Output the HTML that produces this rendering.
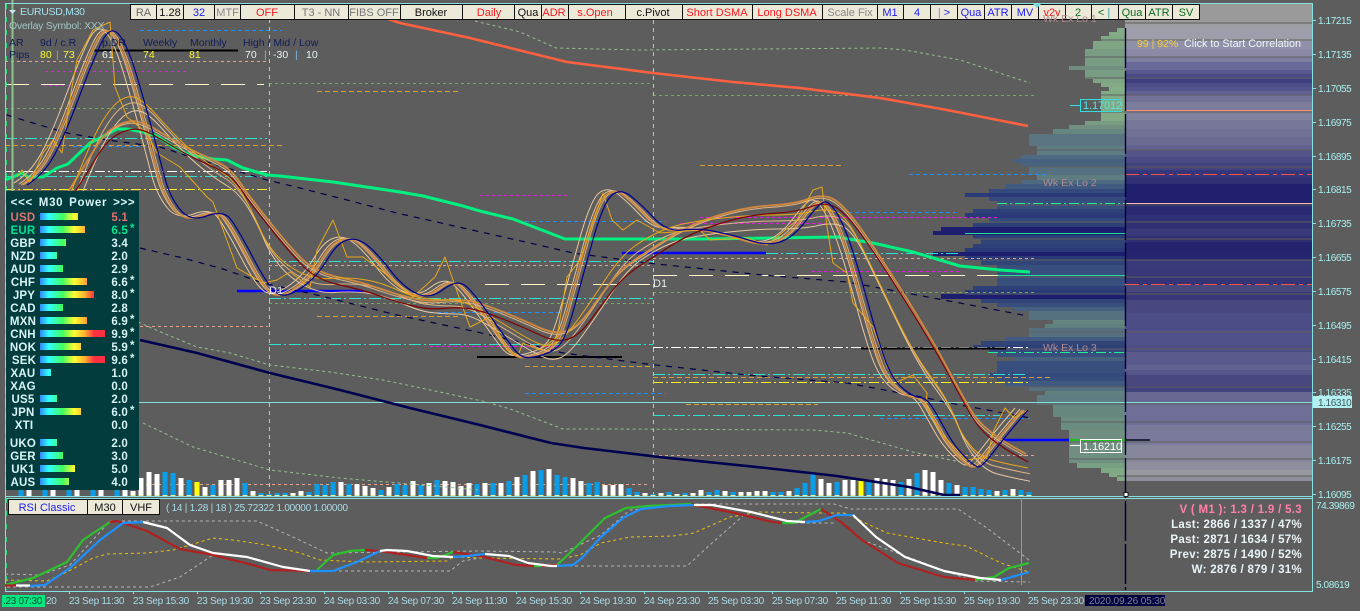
<!DOCTYPE html>
<html><head><meta charset="utf-8"><style>
html,body{margin:0;padding:0;width:1360px;height:611px;overflow:hidden;background:#5d5d5d}
svg{display:block;font-family:"Liberation Sans",sans-serif}
.bt rect{fill:#ece9d8;stroke:#111;stroke-width:1}
.bt text{font-size:11px;text-anchor:middle}
.ax text{font-size:10px;fill:#a8f0f0;letter-spacing:-.4px}
.tm text{font-size:10px;fill:#a8dce8;letter-spacing:-.3px}
.pn text{font-size:11.5px;font-weight:bold;fill:#d8f4f8;letter-spacing:.2px}
.rt text{font-size:11.5px;font-weight:bold;fill:#e8f4f8;text-anchor:end;letter-spacing:.3px}
.hd text{font-size:10.5px}
.t path,.t use{fill:none;stroke-linejoin:round}
</style></head><body>
<svg width="1360" height="611" viewBox="0 0 1360 611" xmlns="http://www.w3.org/2000/svg">
<defs><linearGradient id="g" gradientUnits="userSpaceOnUse" x1="40" y1="0" x2="106" y2="0">
<stop offset="0" stop-color="#3088ff"/><stop offset=".13" stop-color="#30ffff"/><stop offset=".34" stop-color="#40ff60"/><stop offset=".52" stop-color="#ffff30"/><stop offset=".68" stop-color="#ffb030"/><stop offset=".82" stop-color="#ff3040"/><stop offset="1" stop-color="#ff3040"/></linearGradient>
<clipPath id="c"><rect x="0" y="0" width="1030" height="496"/></clipPath>
<path id="nv" d="M27 185Q43 175 53 157.5Q63 140 78 100Q93 60 101.5 42.5Q110 25 118.5 34Q127 43 137 76.5Q147 110 153.5 135Q160 160 165 178.5Q170 197 180 209.5Q190 222 206.5 216Q223 210 230 218.5Q237 227 253.5 258.5Q270 290 278.5 294Q287 298 302 287.5Q317 277 327 260Q337 243 347 240Q357 237 367 245Q377 253 390 270Q403 287 416.5 293.5Q430 300 444 289Q458 278 467.5 287.5Q477 297 492 318.5Q507 340 513.5 348.5Q520 357 526.5 357.5Q533 358 545 354Q557 350 562 341.5Q567 333 573.5 310Q580 287 591.5 245Q603 203 611.5 195.5Q620 188 630 195.5Q640 203 653.5 217.5Q667 232 682 230Q697 228 715 231.5Q733 235 750 240.5Q767 246 780 242Q793 238 806.5 220Q820 202 825 202Q830 202 836.5 212.5Q843 223 850 243Q857 263 868.5 305Q880 347 886.5 363.5Q893 380 903 388.5Q913 397 920 397.5Q927 398 933.5 409Q940 420 947.5 433.5Q955 447 965 457Q975 467 978.5 467Q982 467 993.5 452Q1005 437 1016.5 423.5L1028 410"/>
<path id="rd" d="M70 200Q87 173 97 156.5Q107 140 118.5 134Q130 128 138.5 129.5Q147 131 157 137Q167 143 180 150.5Q193 158 210 165.5Q227 173 233.5 180Q240 187 244 193.5Q248 200 269 226.5Q290 253 303.5 266.5Q317 280 340 285Q363 290 380 296Q397 302 413.5 306Q430 310 443.5 308.5Q457 307 468.5 308.5Q480 310 501.5 318.5Q523 327 540 335Q557 343 568.5 339Q580 335 591.5 319Q603 303 613 290Q623 277 638 267Q653 257 673 244.5Q693 232 720 223.5Q747 215 772 213.5Q797 212 810 207Q823 202 833 206Q843 210 858 230Q873 250 901.5 295Q930 340 947.5 372.5Q965 405 972.5 417.5Q980 430 991.5 439Q1003 448 1015.5 455L1028 462"/>
<path id="s0" d="M68 200Q90 143 100 125.5Q110 108 118.5 101.5Q127 95 135 97.5Q143 100 155 113.5Q167 127 178.5 138.5Q190 150 201.5 158.5Q213 167 221.5 172Q230 177 238.5 188.5Q247 200 258.5 226.5Q270 253 290 266.5Q310 280 328.5 278.5Q347 277 363.5 279.5Q380 282 396.5 289.5Q413 297 425 298.5Q437 300 450 300Q463 300 480 310Q497 320 513.5 330Q530 340 538.5 343.5Q547 347 555 343.5Q563 340 576.5 321.5Q590 303 605 280Q620 257 633.5 247Q647 237 663.5 230Q680 223 713.5 219Q747 215 772 215Q797 215 812 211.5Q827 208 837 212.5Q847 217 860 243.5Q873 270 893 311.5Q913 353 930 375.5Q947 398 953.5 415.5Q960 433 970 445Q980 457 991.5 460Q1003 463 1015.5 465.5L1028 468"/>
</defs>
<rect width="1360" height="611" fill="#5d5d5d"/>

<!-- profile right -->
<g shape-rendering="crispEdges">
<rect x="1125" y="3" width="187" height="20" fill="#9a9a9a"/><rect x="1125" y="23" width="187" height="5" fill="#9e9ea2"/><rect x="1125" y="28" width="187" height="13" fill="#9d9dab"/><rect x="1125" y="41" width="187" height="8" fill="#9090a8"/><rect x="1125" y="49" width="187" height="8" fill="#8a8aa6"/><rect x="1125" y="57" width="187" height="5" fill="#7e7ea0"/><rect x="1125" y="62" width="187" height="8" fill="#6a6a9a"/><rect x="1125" y="70" width="187" height="4" fill="#58588e"/><rect x="1125" y="74" width="187" height="5" fill="#4a4a88"/><rect x="1125" y="79" width="187" height="4" fill="#3e3e80"/><rect x="1125" y="83" width="187" height="4" fill="#4e4e8a"/><rect x="1125" y="87" width="187" height="4" fill="#54548c"/><rect x="1125" y="91" width="187" height="4" fill="#626294"/><rect x="1125" y="95" width="187" height="7" fill="#737398"/><rect x="1125" y="102" width="187" height="10" fill="#7c7c9c"/><rect x="1125" y="112" width="187" height="8" fill="#80809f"/><rect x="1125" y="120" width="187" height="9" fill="#777799"/><rect x="1125" y="129" width="187" height="8" fill="#717195"/><rect x="1125" y="137" width="187" height="8" fill="#6c6c92"/><rect x="1125" y="145" width="187" height="5" fill="#626290"/><rect x="1125" y="150" width="187" height="7" fill="#54548a"/><rect x="1125" y="157" width="187" height="6" fill="#4a4a84"/><rect x="1125" y="163" width="187" height="7" fill="#42427e"/><rect x="1125" y="170" width="187" height="8" fill="#36367a"/><rect x="1125" y="178" width="187" height="6" fill="#303076"/><rect x="1125" y="184" width="187" height="22" fill="#20206e"/><rect x="1125" y="206" width="187" height="9" fill="#2a2a72"/><rect x="1125" y="215" width="187" height="7" fill="#303076"/><rect x="1125" y="222" width="187" height="7" fill="#2f2f74"/><rect x="1125" y="229" width="187" height="7" fill="#3a3a7a"/><rect x="1125" y="236" width="187" height="6" fill="#2e2e72"/><rect x="1125" y="242" width="187" height="11" fill="#24246e"/><rect x="1125" y="253" width="187" height="7" fill="#26266e"/><rect x="1125" y="260" width="187" height="8" fill="#3a3a7a"/><rect x="1125" y="268" width="187" height="7" fill="#38387a"/><rect x="1125" y="275" width="187" height="10" fill="#343476"/><rect x="1125" y="285" width="187" height="7" fill="#48487e"/><rect x="1125" y="292" width="187" height="8" fill="#383878"/><rect x="1125" y="300" width="187" height="13" fill="#48487f"/><rect x="1125" y="313" width="187" height="17" fill="#4c4c86"/><rect x="1125" y="330" width="187" height="15" fill="#50508a"/><rect x="1125" y="345" width="187" height="7" fill="#4e4e86"/><rect x="1125" y="352" width="187" height="13" fill="#5a5a8c"/><rect x="1125" y="365" width="187" height="5" fill="#626290"/><rect x="1125" y="370" width="187" height="5" fill="#56568a"/><rect x="1125" y="375" width="187" height="10" fill="#48487f"/><rect x="1125" y="385" width="187" height="7" fill="#42427c"/><rect x="1125" y="392" width="187" height="12" fill="#686892"/><rect x="1125" y="404" width="187" height="21" fill="#6e6e96"/><rect x="1125" y="425" width="187" height="20" fill="#7a7a9a"/><rect x="1125" y="445" width="187" height="17" fill="#86869d"/><rect x="1125" y="462" width="187" height="8" fill="#8e8e9f"/><rect x="1125" y="470" width="187" height="6" fill="#98989e"/><rect x="1125" y="476" width="187" height="5" fill="#8f8f9c"/>

<!-- profile histogram -->
<rect x="1117" y="28" width="8" height="4" fill="#82ab85"/><rect x="1109" y="32" width="16" height="4" fill="#82ab85"/><rect x="1101" y="36" width="24" height="5" fill="#7fa885"/><rect x="1093" y="41" width="32" height="8" fill="#7fa585"/><rect x="1085" y="49" width="40" height="17" fill="#789d83"/><rect x="1069" y="66" width="56" height="4" fill="#708f80"/><rect x="1085" y="70" width="40" height="9" fill="#789d83"/><rect x="1093" y="79" width="32" height="4" fill="#7fa585"/><rect x="1101" y="83" width="24" height="4" fill="#82ab85"/><rect x="1109" y="87" width="16" height="4" fill="#84ae87"/><rect x="1101" y="91" width="24" height="30" fill="#82ab85"/><rect x="1085" y="121" width="40" height="4" fill="#789d83"/><rect x="1069" y="125" width="56" height="4" fill="#708f80"/><rect x="1053" y="129" width="72" height="5" fill="#668780"/><rect x="1029" y="134" width="96" height="12" fill="#5a7482"/><rect x="1037" y="146" width="88" height="9" fill="#5f7c82"/><rect x="1021" y="155" width="104" height="4" fill="#4e6a82"/><rect x="1013" y="159" width="112" height="4" fill="#466080"/><rect x="1021" y="163" width="104" height="4" fill="#4a6480"/><rect x="1029" y="167" width="96" height="8" fill="#557080"/><rect x="1037" y="175" width="88" height="5" fill="#5f7c82"/><rect x="1021" y="180" width="104" height="4" fill="#4e6a82"/><rect x="1005" y="184" width="120" height="5" fill="#405a80"/><rect x="989" y="189" width="136" height="4" fill="#344a7c"/><rect x="965" y="193" width="160" height="4" fill="#2a3a78"/><rect x="989" y="197" width="136" height="4" fill="#344a7c"/><rect x="997" y="201" width="128" height="8" fill="#384f7e"/><rect x="973" y="209" width="152" height="4" fill="#2e4078"/><rect x="965" y="213" width="160" height="5" fill="#2a3a78"/><rect x="989" y="218" width="136" height="5" fill="#344a7c"/><rect x="973" y="223" width="152" height="4" fill="#2e4078"/><rect x="941" y="227" width="184" height="4" fill="#1e1e70"/><rect x="933" y="231" width="192" height="4" fill="#1e1e70"/><rect x="973" y="235" width="152" height="4" fill="#2e4078"/><rect x="981" y="239" width="144" height="5" fill="#304478"/><rect x="973" y="244" width="152" height="4" fill="#2e4078"/><rect x="965" y="248" width="160" height="4" fill="#2a3a78"/><rect x="933" y="252" width="192" height="4" fill="#1e1e70"/><rect x="965" y="256" width="160" height="4" fill="#2a3a78"/><rect x="981" y="260" width="144" height="5" fill="#304478"/><rect x="997" y="265" width="128" height="21" fill="#384f7e"/><rect x="973" y="286" width="152" height="4" fill="#2e4078"/><rect x="965" y="290" width="160" height="4" fill="#2a3a78"/><rect x="941" y="294" width="184" height="5" fill="#1e1e70"/><rect x="981" y="299" width="144" height="4" fill="#304478"/><rect x="997" y="303" width="128" height="4" fill="#384f7e"/><rect x="1013" y="307" width="112" height="4" fill="#466080"/><rect x="1029" y="311" width="96" height="9" fill="#557080"/><rect x="1053" y="320" width="72" height="4" fill="#668780"/><rect x="1045" y="324" width="80" height="4" fill="#60807f"/><rect x="1029" y="328" width="96" height="9" fill="#557080"/><rect x="1005" y="337" width="120" height="4" fill="#405a80"/><rect x="981" y="341" width="144" height="4" fill="#304478"/><rect x="973" y="345" width="152" height="4" fill="#2e4078"/><rect x="989" y="349" width="136" height="4" fill="#344a7c"/><rect x="997" y="353" width="128" height="4" fill="#384f7e"/><rect x="1013" y="357" width="112" height="4" fill="#466080"/><rect x="997" y="361" width="128" height="12" fill="#384f7e"/><rect x="989" y="373" width="136" height="4" fill="#344a7c"/><rect x="997" y="377" width="128" height="4" fill="#384f7e"/><rect x="1005" y="381" width="120" height="6" fill="#405a80"/><rect x="1029" y="387" width="96" height="4" fill="#557080"/><rect x="1045" y="391" width="80" height="4" fill="#60807f"/><rect x="1037" y="395" width="88" height="10" fill="#5f7c82"/><rect x="1053" y="405" width="72" height="12" fill="#668780"/><rect x="1061" y="417" width="64" height="13" fill="#6b8c80"/><rect x="1069" y="430" width="56" height="33" fill="#708f80"/><rect x="1077" y="463" width="48" height="5" fill="#78a083"/><rect x="1101" y="468" width="24" height="5" fill="#7fa885"/><rect x="1109" y="473" width="16" height="4" fill="#82ab85"/><rect x="1117" y="477" width="8" height="4" fill="#82ab85"/>
</g>
<!-- profile grid -->
<path d="M1085 23H1312M1093 40H1312M1085 57H1312M1085 78H1312M1101 95H1312M1101 112H1312M1037 150H1312M1021 167H1312M997 205H1312M989 222H1312M973 239H1312M981 260H1312M997 277H1312M965 294H1312M1029 332H1312M973 349H1312M1005 387H1312M1037 404H1312M1061 422H1312M1069 442H1312M1069 459H1312M1117 476H1312" stroke="#5f5f5f" stroke-width="1" shape-rendering="crispEdges"/>

<!-- horizontal level lines -->
<g fill="none" stroke-width="1" shape-rendering="crispEdges">
<path d="M140 30.5H282M73 146.5H145M525 221.5H666M430 312.5H560M525 393.5H666M848 212.5H955M909 174.5H1050M880 418.5H1030" stroke="#2090ff" stroke-dasharray="4 3"/>
<path d="M5 61.5H268M140 326.5H268M653 258.5H1034M269 265.5H653M140 484.5H650M653 455.5H1034" stroke="#e8a48a" stroke-dasharray="3 3"/>
<path d="M45 71.5H187M43 85.5H70M480 195.5H570M700 217.5H1000M680 223.5H830M812 271.5H960M430 346.5H560" stroke="#e020e0" stroke-dasharray="3 3"/>
<path d="M5 84.5H264M485 284.5H650M653 275.5H1126" stroke="#fff8c8" stroke-dasharray="24 12" stroke-width="1"/>
<path d="M5 108.5H267M269 83.5H650M269 303.5H653M653 95.5H1034M653 292.5H1034" stroke="#74ad58" stroke-dasharray="3 3"/>
<path d="M5 138.5H267M5 176.5H267M269 261.5H653M269 298.5H653M269 344.5H653M653 374.5H1028M653 415.5H1000M766 253.5H960" stroke="#30e0d0" stroke-dasharray="12 3 2 3"/>
<path d="M5 145.5H282M317 91.5H458M317 316.5H458M653 377.5H1050M700 165.5H842M686 404.5H818M525 366.5H653" stroke="#d8a030" stroke-dasharray="5 3"/>
<path d="M5 171.5H267M653 347.5H1028" stroke="#fff" stroke-dasharray="10 3 2 3"/>
<path d="M5 189.5H267M653 382.5H1028" stroke="#f8f020" stroke-dasharray="10 3 2 3"/>
<path d="M988 352.5H1126M997 203.5H1126" stroke="#20f090" stroke-dasharray="10 3 2 3"/>
<path d="M965 233.5H1126M998 275.5H1126" stroke="#20e0a0"/>
<path d="M1125 203.5H1312" stroke="#ffb8b8"/>
<path d="M1125 110.5H1312" stroke="#ff9070" stroke-width="1"/>
<path d="M1125 174.5H1312M1125 284.5H1312" stroke="#ff5040" stroke-dasharray="14 4 4 4"/>
<path d="M269.5 3V496M653.5 20V496" stroke="#c4c4c4" stroke-dasharray="4 4"/>
<path d="M5 402.5H1312" stroke="#80e0d8"/>
</g>
<path d="M94 50.5H238M477 357H622M861 348.5H1006" stroke="#000" stroke-width="2" fill="none"/>
<path d="M237 291H363M622 253H766M1003 440H1069" stroke="#0000ff" stroke-width="2.4" fill="none"/>
<path d="M1069 440H1125" stroke="#20c020" stroke-width="2" fill="none"/>
<path d="M1125 440H1150" stroke="#20243c" stroke-width="2" fill="none"/>

<!-- volume bars -->
<g fill="none" stroke-width="5" shape-rendering="crispEdges">
<path stroke="#fff" d="M133 496V491M141 496V478M149 496V472M157 496V474M181 496V478M205 496V487M221 496V480M229 496V480M237 496V478M253 496V491M293 496V493M301 496V491M341 496V482M357 496V484M365 496V486M373 496V488M389 496V487M413 496V481M429 496V483M445 496V481M453 496V482M461 496V486M469 496V483M485 496V483M501 496V483M517 496V477M533 496V471M549 496V469M573 496V478M581 496V481M605 496V485M613 496V485M621 496V484M645 496V493M661 496V493M677 496V494M693 496V493M701 496V490M725 496V491M741 496V492M749 496V492M757 496V491M765 496V491M789 496V491M821 496V479M829 496V483M845 496V480M853 496V480M877 496V478M885 496V479M893 496V480M909 496V479M925 496V470M933 496V472M941 496V480M957 496V485M997 496V491M1013 496V489M29 496V490M53 496V490M77 496V490M101 496V490M125 496V490"/>
<path stroke="#0a9ee8" d="M165 496V472M173 496V473M189 496V480M213 496V485M245 496V483M261 496V493M269 496V494M277 496V493M285 496V493M309 496V492M317 496V484M325 496V485M333 496V482M349 496V484M381 496V490M397 496V484M405 496V485M421 496V485M437 496V480M477 496V484M493 496V483M509 496V481M525 496V475M541 496V470M557 496V475M565 496V477M589 496V483M597 496V482M629 496V488M637 496V492M653 496V494M669 496V492M685 496V493M709 496V492M717 496V490M733 496V492M773 496V492M781 496V492M797 496V488M805 496V483M813 496V474M837 496V482M869 496V481M901 496V482M917 496V473M949 496V483M965 496V487M973 496V487M981 496V489M989 496V490M1005 496V490M1021 496V490M1029 496V492M21 496V490M45 496V490M69 496V490M93 496V490M117 496V490"/>
<path stroke="#ffff00" d="M197 496V482M861 496V481"/>
</g>
<path d="M130.5 495.5H1032" stroke="#e8f0a0" stroke-width="1" stroke-dasharray="5 3" fill="none"/>

<!-- thin dashed envelopes -->
<g fill="none" stroke="#93c08e" stroke-width="1" stroke-dasharray="3 3">
<path d="M475 21L520 32L556 48L640 50L880 48L905 50L960 60L1030 83"/>
<path d="M138 322L163 333L197 347L230 353L270 365L330 372L383 380L487 402L513 410L563 429L613 429L813 430L847 433L913 452L960 462"/>
<path d="M143 423L193 447L270 470L340 478L480 490"/>
</g>
<!-- dotted curves -->
<g fill="none" stroke="#000048" stroke-width="1.2" stroke-dasharray="6 6">
<path d="M7 115L33 123L67 133L107 140L160 147L200 160L267 180L300 188L347 200L397 213L463 228L530 243L573 253L647 263L763 275L847 282L960 303L1028 316"/>
<path d="M140 248L183 258L223 269L263 283L317 295L397 315L477 332L520 342L563 353L647 364L747 375L847 383L927 398L944 402L998 412L1030 418"/>
</g>
<!-- moving averages -->
<g fill="none" stroke-linejoin="round">
<path d="M385 18L400 23L470 38L567 62L653 73L733 82L800 88L880 98L947 110L1028 126" stroke="#ff6040" stroke-width="2.6"/>
<path d="M140 340L197 353L270 373L340 390L410 408L480 425L551 443L584 448L659 457L766 468L837 476L909 487L944 495L960 495" stroke="#000050" stroke-width="2.6"/>
<path d="M5 180L13 177L22 173L28 177L43 177L57 168L68 164L90 143L100 138L117 129L127 129L143 132L157 136L173 147L190 155L213 159L227 160L243 168L267 175L280 176L333 182L400 192L423 196L463 206L480 211L513 219L547 232L565 239L700 239L837 237L873 243L913 252L960 266L1000 270L1030 272" stroke="#00f080" stroke-width="3"/>
</g>

<!-- wiggles -->
<g class="t" clip-path="url(#c)">
<use href="#nv" stroke="#dcae7c" stroke-width="1" transform="translate(-4 0)"/>
<use href="#nv" stroke="#e6bf90" stroke-width="1" transform="translate(-8 -1)"/>
<use href="#nv" stroke="#e8c8a0" stroke-width="1" transform="translate(-13 -2)"/>
<use href="#nv" stroke="#d08a40" stroke-width="1.6" transform="translate(-6 0)"/>
<use href="#s0" stroke="#e0b484" stroke-width="1" transform="translate(3 6)"/>
<use href="#s0" stroke="#e8c8a0" stroke-width="1" transform="translate(6 14)"/>
<use href="#rd" stroke="#e0b484" stroke-width="1" transform="translate(-3 -6)"/>
<use href="#rd" stroke="#d08a40" stroke-width="1.8" transform="translate(-2 -8)"/>
<path stroke="#e8a818" stroke-width="1" d="M17 177L22 170L30 183L43 153L53 140L62 153L72 87L77 60L93 30L110 22L115 87L127 117L147 133L157 153L180 167L207 197L213 202L237 268L263 283L277 280L290 272L310 287L317 250L333 220L347 257L363 257L383 272L413 297L435 277L445 257L460 300L470 327L490 317L507 350L518 355L523 343L540 350L557 337L567 277L580 260L603 193L612 220L623 230L637 220L660 233L700 230L710 240L747 238L767 245L783 232L797 220L813 190L822 187L827 227L833 263L847 273L853 303L873 327L887 367L897 382L913 375L927 393L926 405L941 433L966 460L987 457L994 430L1005 408L1014 418L1028 410"/>
<use href="#s0" stroke="#e8a818" stroke-width="1"/>
<use href="#rd" stroke="#800000" stroke-width="1.2"/>
<use href="#nv" stroke="#000090" stroke-width="1.2"/>
</g>

<!-- frame -->
<path d="M12.5 0V191" stroke="#8fc48f" stroke-width="2" fill="none"/>
<g fill="none" stroke="#88e0e0" stroke-width="1" shape-rendering="crispEdges">
<path d="M5.5 3.5H1312.5V591.5H5.5Z"/>
<path d="M5 496.5H1312M5 498.5H1312"/>
<path d="M1312 20.5h4M1312 54.5h4M1312 88.5h4M1312 122.5h4M1312 156.5h4M1312 189.5h4M1312 223.5h4M1312 257.5h4M1312 291.5h4M1312 325.5h4M1312 359.5h4M1312 392.5h4M1312 426.5h4M1312 460.5h4M1312 494.5h4"/>
<path d="M69.5 591v3M133.5 591v3M197.5 591v3M260.5 591v3M324.5 591v3M388.5 591v3M452.5 591v3M516.5 591v3M580.5 591v3M644.5 591v3M708.5 591v3M772.5 591v3M836.5 591v3M900.5 591v3M964.5 591v3M1028.5 591v3"/>
</g>
<path d="M6 4V590" stroke="#20ff90" stroke-width="1.5" stroke-dasharray="5 8" fill="none"/>
<path d="M1125.5 28V590" stroke="#000038" stroke-width="1.4" stroke-dasharray="40 3" fill="none"/>
<rect x="1124" y="492.5" width="4" height="4" fill="#fff" stroke="#000" stroke-width=".8"/>

<!-- axis -->
<g class="ax">
<text x="1318" y="24">1.17215</text><text x="1318" y="58">1.17135</text><text x="1318" y="92">1.17055</text><text x="1318" y="126">1.16975</text><text x="1318" y="160">1.16895</text><text x="1318" y="193">1.16815</text><text x="1318" y="227">1.16735</text><text x="1318" y="261">1.16655</text><text x="1318" y="295">1.16575</text><text x="1318" y="329">1.16495</text><text x="1318" y="363">1.16415</text><text x="1318" y="396">1.16335</text><text x="1318" y="430">1.16255</text><text x="1318" y="464">1.16175</text><text x="1318" y="498">1.16095</text>
<text x="1316" y="509">74.39869</text><text x="1316" y="588">5.08619</text>
</g>
<rect x="1313" y="396" width="39" height="12" fill="#b4f0f0"/>
<text x="1318" y="406" font-size="10" letter-spacing="-.4" fill="#3a5a5a">1.16310</text>

<!-- price tags -->
<path d="M1070 105.5H1080" stroke="#30e0e0"/>
<rect x="1080.5" y="99.5" width="41" height="12" fill="none" stroke="#30e0e0"/>
<text x="1083" y="109" font-size="11" fill="#50e8e8" letter-spacing="-.1">1.17012</text>
<path d="M1070 445.5H1080" stroke="#fff"/>
<rect x="1080.5" y="439.5" width="41" height="13" fill="none" stroke="#fff"/>
<text x="1083" y="450" font-size="11" fill="#fff" letter-spacing="-.1">1.16210</text>
<text x="653" y="287" font-size="11" fill="#e8f0f0">D1</text>
<text x="269" y="294" font-size="11" fill="#e8f0f0">D1</text>

<!-- toolbar -->
<g class="bt">
<rect x="130.5" y="4.5" width="26" height="15"/><text x="143.5" y="16" fill="#666">RA</text>
<rect x="156.5" y="4.5" width="27" height="15"/><text x="170" y="16" fill="#111">1.28</text>
<rect x="183.5" y="4.5" width="31" height="15"/><text x="199" y="16" fill="#2020f0">32</text>
<rect x="214.5" y="4.5" width="26" height="15"/><text x="227.5" y="16" fill="#888">MTF</text>
<rect x="240.5" y="4.5" width="54" height="15"/><text x="267" y="16" fill="#f81820">OFF</text>
<rect x="294.5" y="4.5" width="54" height="15"/><text x="321" y="16" fill="#777">T3 - NN</text>
<rect x="348.5" y="4.5" width="52" height="15"/><text x="374" y="16" fill="#777">FIBS OFF</text>
<rect x="400.5" y="4.5" width="62" height="15"/><text x="431" y="16" fill="#111">Broker</text>
<rect x="462.5" y="4.5" width="52" height="15"/><text x="489" y="16" fill="#f81820">Daily</text>
<rect x="514.5" y="4.5" width="27" height="15"/><text x="528" y="16" fill="#111">Qua</text>
<rect x="541.5" y="4.5" width="27" height="15"/><text x="554" y="16" fill="#f81820">ADR</text>
<rect x="568.5" y="4.5" width="57" height="15"/><text x="595" y="16" fill="#f81820">s.Open</text>
<rect x="625.5" y="4.5" width="57" height="15"/><text x="653" y="16" fill="#111">c.Pivot</text>
<rect x="682.5" y="4.5" width="70" height="15"/><text x="717" y="16" fill="#f81820">Short DSMA</text>
<rect x="752.5" y="4.5" width="70" height="15"/><text x="787" y="16" fill="#f81820">Long DSMA</text>
<rect x="822.5" y="4.5" width="55" height="15"/><text x="850" y="16" fill="#888">Scale Fix</text>
<rect x="877.5" y="4.5" width="26" height="15"/><text x="890" y="16" fill="#2020f0">M1</text>
<rect x="903.5" y="4.5" width="27" height="15"/><text x="917" y="16" fill="#2020f0">4</text>
<rect x="930.5" y="4.5" width="27" height="15"/><text x="944" y="16" fill="#2020f0"><tspan fill="#a070f0">|</tspan> &gt;</text>
<rect x="957.5" y="4.5" width="27" height="15"/><text x="971" y="16" fill="#2020f0">Qua</text>
<rect x="984.5" y="4.5" width="27" height="15"/><text x="998" y="16" fill="#2020f0">ATR</text>
<rect x="1011.5" y="4.5" width="27" height="15"/><text x="1025" y="16" fill="#2020f0">MV</text>
<rect x="1038.5" y="4.5" width="27" height="15"/><text x="1052" y="16" fill="#f81820">v2v</text>
<rect x="1065.5" y="4.5" width="26" height="15"/><text x="1078" y="16" fill="#0a6a20">2</text>
<rect x="1091.5" y="4.5" width="27" height="15"/><text x="1104" y="16" fill="#0a6a20">&lt; <tspan fill="#30a0a0">|</tspan></text>
<rect x="1118.5" y="4.5" width="27" height="15"/><text x="1132" y="16" fill="#0a6a20">Qua</text>
<rect x="1145.5" y="4.5" width="27" height="15"/><text x="1159" y="16" fill="#0a6a20">ATR</text>
<rect x="1172.5" y="4.5" width="27" height="15"/><text x="1186" y="16" fill="#0a6a20">SV</text>
<rect x="8.5" y="499.5" width="79" height="15"/><text x="47" y="511" fill="#2020f0">RSI Classic</text>
<rect x="87.5" y="499.5" width="35" height="15"/><text x="105" y="511" fill="#111">M30</text>
<rect x="122.5" y="499.5" width="37" height="15"/><text x="141" y="511" fill="#111">VHF</text>
</g>
<path d="M1033 4h8l-4 4z" fill="#70d8e0"/>

<!-- header text -->
<g class="hd">
<path d="M9 10h7l-3.5 4z" fill="#c8e8f0"/>
<text x="20" y="15" fill="#a0e0ec" letter-spacing="-.3">EURUSD,M30</text>
<text x="9" y="29" fill="#a0c4c4" letter-spacing="-.3">Overlay Symbol: XXX</text>
<g fill="#101c58">
<text x="9" y="46">AR</text><text x="40" y="46">9d / c.R</text><text x="102" y="46">p.DR</text><text x="143" y="46">Weekly</text><text x="190" y="46">Monthly</text><text x="243" y="46">High / Mid / Low</text><text x="9" y="58">Pips</text>
</g>
<g fill="#f8f830">
<text x="40" y="58">80</text><text x="63" y="58">73</text><text x="143" y="58">74</text><text x="189" y="58">81</text>
</g>
<text x="56" y="58" fill="#c8a030">|</text>
<g fill="#e8f4f8">
<text x="102" y="58">61</text><text x="245" y="58">70</text><text x="273" y="58">-30</text><text x="306" y="58">10</text>
</g>
<text x="264" y="58" fill="#80b8e8">|</text><text x="295" y="58" fill="#80b8e8">|</text>
<text x="1137" y="47" fill="#f8d030">99 | 92%</text>
<text x="1184" y="47" fill="#f0f8fc" style="font-size:10.8px">Click to Start Correlation</text>
<text x="1043" y="22" fill="#b08a90">Wk Ex Lo 1</text>
<text x="1043" y="186" fill="#b08a90">Wk Ex Lo 2</text>
<text x="1043" y="351" fill="#b08a90">Wk Ex Lo 3</text>
<text x="166" y="511" fill="#a8dce8" style="font-size:10px" letter-spacing="-.25">( 14 | 1.28 | 18 ) 25.72322 1.00000 1.00000</text>
</g>

<!-- power panel -->
<rect x="6" y="191" width="133" height="299" fill="#023c3c"/>
<g class="pn">
<text x="73" y="206" text-anchor="middle" style="letter-spacing:.7px;word-spacing:2px">&lt;&lt;&lt; M30 Power &gt;&gt;&gt;</text>
<g text-anchor="middle">
<text x="23" y="221" style="fill:#e87070">USD</text><text x="23" y="234" style="fill:#00e090">EUR</text><text x="23" y="247">GBP</text><text x="23" y="260">NZD</text><text x="23" y="273">AUD</text><text x="23" y="286">CHF</text><text x="24" y="299">JPY</text><text x="23" y="312">CAD</text><text x="23" y="325">MXN</text><text x="23" y="338">CNH</text><text x="23" y="351">NOK</text><text x="24" y="364">SEK</text><text x="23" y="377">XAU</text><text x="23" y="390">XAG</text><text x="23" y="403">US5</text><text x="23" y="416">JPN</text><text x="24" y="429">XTI</text><text x="23" y="447">UKO</text><text x="23" y="460">GER</text><text x="23" y="473">UK1</text><text x="23" y="486">AUS</text>
</g>
<g text-anchor="end">
<text x="128" y="221" style="fill:#e87070">5.1</text><text x="128" y="234" style="fill:#00e890">6.5</text><text x="128" y="247">3.4</text><text x="128" y="260">2.0</text><text x="128" y="273">2.9</text><text x="128" y="286">6.6</text><text x="128" y="299">8.0</text><text x="128" y="312">2.8</text><text x="128" y="325">6.9</text><text x="128" y="338">9.9</text><text x="128" y="351">5.9</text><text x="128" y="364">9.6</text><text x="128" y="377">1.0</text><text x="128" y="390">0.0</text><text x="128" y="403">2.0</text><text x="128" y="416">6.0</text><text x="128" y="429">0.0</text><text x="128" y="447">2.0</text><text x="128" y="460">3.0</text><text x="128" y="473">5.0</text><text x="128" y="486">4.0</text>
</g>
<text x="130" y="232" style="fill:#00e890">*</text><text x="130" y="284">*</text><text x="130" y="297">*</text><text x="130" y="323">*</text><text x="130" y="336">*</text><text x="130" y="349">*</text><text x="130" y="362">*</text><text x="130" y="414">*</text>
</g>
<g fill="url(#g)" shape-rendering="crispEdges">
<rect x="40" y="213" width="38" height="7"/><rect x="40" y="226" width="45" height="7"/><rect x="40" y="239" width="26" height="7"/><rect x="40" y="252" width="17" height="7"/><rect x="40" y="265" width="23" height="7"/><rect x="40" y="278" width="47" height="7"/><rect x="40" y="291" width="54" height="7"/><rect x="40" y="304" width="23" height="7"/><rect x="40" y="317" width="47" height="7"/><rect x="40" y="330" width="65" height="7"/><rect x="40" y="343" width="41" height="7"/><rect x="40" y="356" width="65" height="7"/><rect x="40" y="369" width="11" height="7"/><rect x="40" y="395" width="17" height="7"/><rect x="40" y="408" width="41" height="7"/><rect x="40" y="439" width="17" height="7"/><rect x="40" y="452" width="23" height="7"/><rect x="40" y="465" width="35" height="7"/><rect x="40" y="478" width="29" height="7"/>
</g>

<!-- RSI pane -->
<g fill="none" stroke-linejoin="round">
<path d="M5 574L40 575L70 565L110 521L257 521L293 537L327 553L477 551L555 552L562 553L601 535L630 510L694 504L834 504L851 509L958 509L987 528L1029 560" stroke="#b4b4b4" stroke-dasharray="3 3"/>
<path d="M7 587L150 587L180 577L213 555M333 571L450 571L463 561L480 558M569 566L687 566L712 543L744 515L780 523L834 523M862 540L973 581L1030 582" stroke="#b4b4b4" stroke-dasharray="3 3"/>
<path d="M5 580L47 581L67 572L93 558L107 554L147 553L173 550L200 542L213 538L233 540L267 545L300 553L320 560L367 562L447 561L453 557L480 558L559 559L580 555L601 543L630 537L673 536L694 533L730 517L759 512L823 513L844 513L887 533L944 543L966 546L1001 563L1029 572" stroke="#f0c000" stroke-dasharray="3 3"/>
<path d="M1021.5 498V585" stroke="#9a9a9a"/>
<g stroke-width="2.2">
<path stroke="#2ec02e" d="M5 585L33 578L67 562L83 540L110 522M317 570L333 555L350 551L365 550M427 558L437 558L453 552M534 566L542 566M557 565L576 547L605 518L626 508L648 506L691 504M782 523L794 523L821 509M975 580L994 577L1009 568L1029 563"/>
<path stroke="#b02020" d="M5 585.5H16M110 522L117 521L147 531L180 549L213 555L253 565L270 570L310 571M365 550L380 551L427 558M453 552L480 556L516 565L534 566M542 566L557 565M691 504L694 505L730 512L773 522L782 523M821 509L841 522L862 540L898 563L944 577L975 580"/>
<path stroke="#1e90ff" d="M30 586L45 585L70 568L100 540L123 523L143 522M310 571L333 571L357 562L380 551M453 557L467 556L485 554M557 566L573 565L582 558L601 537L623 518L641 509L669 506L694 505M805 522L819 521L837 515L853 515M1001 580L1029 572"/>
<path stroke="#fff" d="M16 585.5H30M143 522L167 528L190 545L213 553L247 557L283 567L310 571M380 551L387 550L407 551L433 556L453 557M485 554L509 556L528 563L551 566L557 566M694 505L712 505L751 512L787 521L805 522M853 515L876 537L905 557L944 571L980 578L1001 580"/>
</g>
</g>

<!-- right stats -->
<g class="rt">
<text x="1302" y="513" style="fill:#ff80a8">V ( M1 ): 1.3 / 1.9 / 5.3</text>
<text x="1302" y="528">Last: 2866 / 1337 / 47%</text>
<text x="1302" y="543">Past: 2871 / 1634 / 57%</text>
<text x="1302" y="558">Prev: 2875 / 1490 / 52%</text>
<text x="1302" y="573">W: 2876 / 879 / 31%</text>
</g>

<!-- time axis -->
<rect x="2" y="595" width="43" height="12" fill="#00e880"/>
<g class="tm">
<text x="3" y="604" style="fill:#0a4a30">.23 07:30</text>
<text x="46" y="604">20</text>
<text x="69" y="604">23 Sep 11:30</text><text x="133" y="604">23 Sep 15:30</text><text x="197" y="604">23 Sep 19:30</text><text x="260" y="604">23 Sep 23:30</text><text x="324" y="604">24 Sep 03:30</text><text x="388" y="604">24 Sep 07:30</text><text x="452" y="604">24 Sep 11:30</text><text x="516" y="604">24 Sep 15:30</text><text x="580" y="604">24 Sep 19:30</text><text x="644" y="604">24 Sep 23:30</text><text x="708" y="604">25 Sep 03:30</text><text x="772" y="604">25 Sep 07:30</text><text x="836" y="604">25 Sep 11:30</text><text x="900" y="604">25 Sep 15:30</text><text x="964" y="604">25 Sep 19:30</text><text x="1028" y="604">25 Sep 23:30</text>
</g>
<rect x="1085" y="595" width="80" height="11" fill="#000040"/>
<text x="1089" y="604" font-size="10" fill="#808090" letter-spacing="-.1">2020.09.26 05:30</text>
</svg>
</body></html>
